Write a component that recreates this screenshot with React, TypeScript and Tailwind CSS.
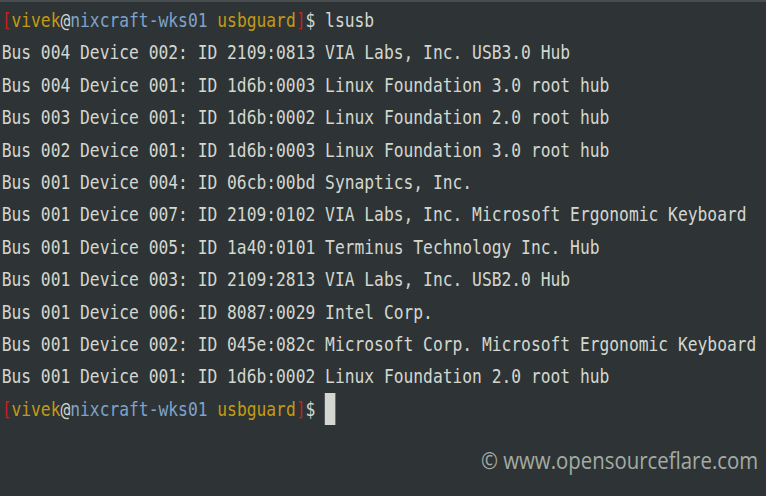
import React from "react";

const lines = [
  "Bus 004 Device 002: ID 2109:0813 VIA Labs, Inc. USB3.0 Hub",
  "Bus 004 Device 001: ID 1d6b:0003 Linux Foundation 3.0 root hub",
  "Bus 003 Device 001: ID 1d6b:0002 Linux Foundation 2.0 root hub",
  "Bus 002 Device 001: ID 1d6b:0003 Linux Foundation 3.0 root hub",
  "Bus 001 Device 004: ID 06cb:00bd Synaptics, Inc.",
  "Bus 001 Device 007: ID 2109:0102 VIA Labs, Inc. Microsoft Ergonomic Keyboard",
  "Bus 001 Device 005: ID 1a40:0101 Terminus Technology Inc. Hub",
  "Bus 001 Device 003: ID 2109:2813 VIA Labs, Inc. USB2.0 Hub",
  "Bus 001 Device 006: ID 8087:0029 Intel Corp.",
  "Bus 001 Device 002: ID 045e:082c Microsoft Corp. Microsoft Ergonomic Keyboard",
  "Bus 001 Device 001: ID 1d6b:0002 Linux Foundation 2.0 root hub",
];

function Prompt({ children }: { children?: React.ReactNode }) {
  return (
    <div className="flex items-stretch whitespace-pre">
      <span className="text-[#c4201d]">[</span>
      <span className="text-[#c49a14]">vivek</span>
      <span className="text-[#d3d7cf]">@</span>
      <span className="text-[#7fa3cc]">nixcraft-wks01 </span>
      <span className="text-[#c49a14]">usbguard</span>
      <span className="text-[#c4201d]">]</span>
      <span className="text-[#d3d7cf]">$ </span>
      {children}
    </div>
  );
}

export default function App() {
  return (
    <div className="w-[766px] h-[496px] overflow-hidden bg-[#2e3436] border-t-2 border-[#474c4e] relative">
      <div
        className="w-[940px] origin-top-left scale-x-[0.814] pl-[2px] pt-[2px] text-[20px] leading-[32.4px] text-[#d3d7cf]"
        style={{ fontFamily: '"DejaVu Sans Mono", monospace' }}
      >
        <Prompt>
          <span>lsusb</span>
        </Prompt>
        {lines.map((l, i) => (
          <div key={i} className="whitespace-pre">
            {l}
          </div>
        ))}
        <Prompt>
          <span className="inline-block w-[13px] h-[32px] bg-[#d3d7cf]" />
        </Prompt>
      </div>
      <div className="flex justify-end pr-[8px] mt-[20px]">
        <div
          className="origin-right scale-x-[0.85] text-[24px] leading-[30px] text-[#a3aba3] whitespace-pre"
          style={{ fontFamily: '"Open Sans", sans-serif' }}
        >
          © www.opensourceflare.com
        </div>
      </div>
    </div>
  );
}
